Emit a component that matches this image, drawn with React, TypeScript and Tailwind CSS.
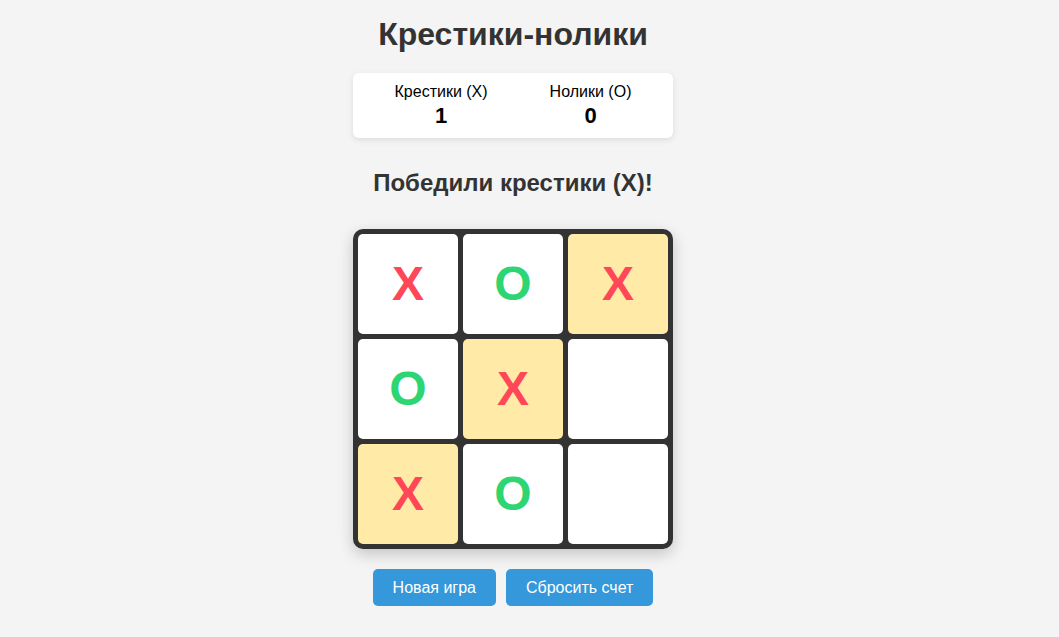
const board = ["X", "O", "X", "O", "X", "", "X", "O", ""];
const winLine = [2, 4, 6];

const Cell = ({ value, win }: { value: string; win: boolean }) => (
  <div
    className={`flex h-[100px] w-[100px] items-center justify-center rounded-[5px] text-[48px] font-bold leading-none ${
      win ? "bg-[#ffeaa7]" : "bg-white"
    } ${value === "X" ? "text-[#ff4757]" : "text-[#2ed573]"}`}
  >
    {value}
  </div>
);

export default function App() {
  return (
    <div
      className="flex min-h-screen flex-col items-center bg-[#f4f4f4] pr-[33px]"
      style={{ fontFamily: '"Liberation Sans", Arial, sans-serif' }}
    >
      <h1 className="mt-[16px] text-[32px] font-bold leading-[37px] text-[#333]">Крестики-нолики</h1>

      {/* счет */}
      <div className="mt-[20px] flex w-[320px] justify-center gap-[62px] rounded-[6px] bg-white pt-[10px] pb-[9px] text-center text-black shadow-[0_2px_6px_rgba(0,0,0,0.1)]">
        <div>
          <div className="text-[16px] leading-[18px]">Крестики (X)</div>
          <div className="mt-[2px] text-[22px] font-bold leading-[26px]">1</div>
        </div>
        <div>
          <div className="text-[16px] leading-[18px]">Нолики (O)</div>
          <div className="mt-[2px] text-[22px] font-bold leading-[26px]">0</div>
        </div>
      </div>

      <h2 className="mt-[31px] text-[24px] font-bold leading-[28px] text-[#333]">Победили крестики (X)!</h2>

      {/* поле */}
      <div className="mt-[32px] grid w-[320px] grid-cols-3 gap-[5px] rounded-[10px] bg-[#333] p-[5px] shadow-[0_5px_15px_rgba(0,0,0,0.2)]">
        {board.map((v, i) => (
          <Cell key={i} value={v} win={winLine.includes(i)} />
        ))}
      </div>

      <div className="mt-[20px] flex gap-[10px]">
        <button className="h-[37px] rounded-[5px] bg-[#3498db] px-[20px] text-[16px] text-white">Новая игра</button>
        <button className="h-[37px] rounded-[5px] bg-[#3498db] px-[20px] text-[16px] text-white">Сбросить счет</button>
      </div>
    </div>
  );
}
